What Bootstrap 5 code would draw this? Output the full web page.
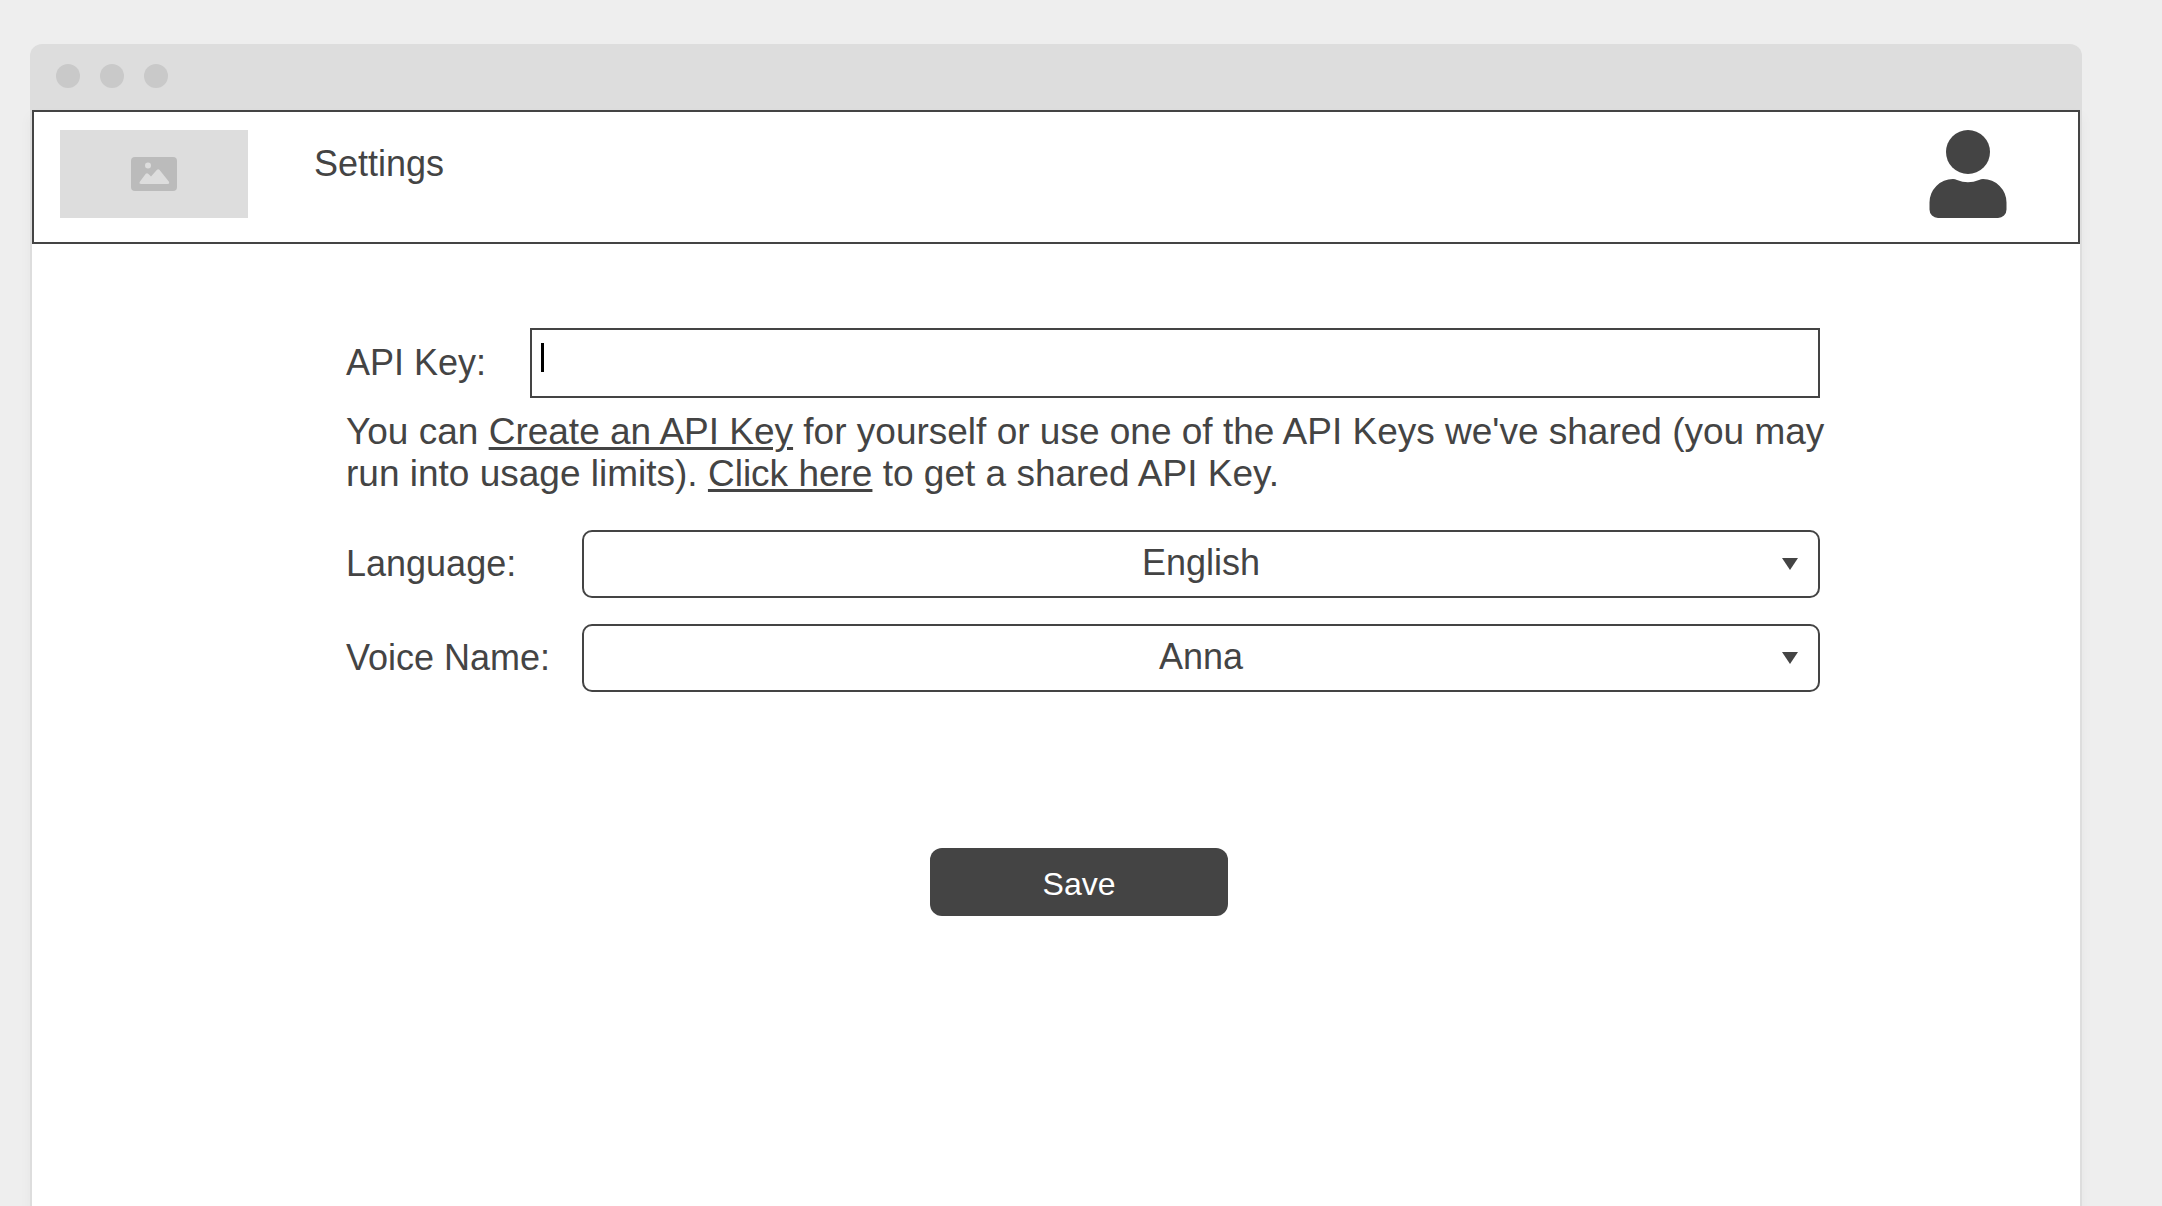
<!DOCTYPE html>
<html lang="en">
<head>
<meta charset="utf-8">
<meta name="viewport" content="width=device-width, initial-scale=1">
<title>Settings</title>
<link href="https://cdn.jsdelivr.net/npm/bootstrap@5.3.0/dist/css/bootstrap.min.css" rel="stylesheet">
<style>
  :root { --ink: #444; --chrome: #ddd; }
  body { background: #eee; color: var(--ink); font-family: "Liberation Sans", Arial, sans-serif; font-size: 36px; line-height: 42px; }
  .stage { padding: 44px 80px 0 30px; }
  .title-strip { background: var(--chrome); border-radius: 12px 12px 0 0; padding: 20px 26px 22px; gap: 20px; }
  .dot { width: 24px; height: 24px; background: #c9c9c9; }
  .pane { border: solid var(--chrome); border-width: 0 2px; box-shadow: 0 6px 12px rgba(0,0,0,.04); }
  .app-bar { border: 2px solid var(--ink); padding: 18px 71px 24px 26px; gap: 66px; }
  .logo-box { width: 188px; height: 88px; background: var(--chrome); }
  .app-title { font-size: 36px; line-height: 42px; margin-top: 13px; font-weight: 400; }
  .settings-form { padding: 84px 260px 80px 314px; }
  .key-label { width: 184px; }
  .pick-label { width: 236px; }
  .key-input, .key-input:focus { height: 70px; border: 2px solid var(--ink); border-radius: 0; font-size: 36px; color: var(--ink); box-shadow: none; }
  .caret-bar { left: 11px; top: 15px; width: 3px; height: 29px; background: #000; }
  .help-text { margin: 13px -8px 35px 0; font-size: 37px; }
  .help-text a { color: inherit; text-decoration-thickness: 3px; text-underline-offset: 3px; }
  .pick { height: 68px; border: 2px solid var(--ink); border-radius: 10px; padding: 7px 36px 9px; font-size: 36px; line-height: 48px; color: var(--ink); text-align-last: center;
    background-image: url("data:image/svg+xml,%3Csvg xmlns='http://www.w3.org/2000/svg' viewBox='0 0 16 12'%3E%3Cpath d='M0 0H16L8 12Z' fill='%23444'/%3E%3C/svg%3E"); background-size: 16px 12px; background-position: right 20px center; }
  .pick-row + .pick-row { margin-top: 26px; }
  .save-row { margin-top: 156px; }
  .save-btn, .save-btn:hover { width: 298px; height: 68px; border: 0; border-radius: 12px; background: var(--ink); color: #fff; font-size: 32px; line-height: 38px; padding: 17px 0 13px; }
</style>
<script src="https://cdn.jsdelivr.net/npm/bootstrap@5.3.0/dist/js/bootstrap.bundle.min.js" defer></script>
</head>
<body>
<div class="stage min-vh-100 d-flex flex-column">
  <div class="title-strip d-flex">
    <span class="dot rounded-circle"></span>
    <span class="dot rounded-circle"></span>
    <span class="dot rounded-circle"></span>
  </div>
  <div class="pane bg-white flex-grow-1">
    <header class="app-bar d-flex align-items-start">
      <div class="logo-box d-flex align-items-center justify-content-center flex-shrink-0">
        <svg width="46" height="34" viewBox="0 0 46 34" role="img" aria-label="Logo">
          <rect width="46" height="34" rx="4" fill="#bbb"/>
          <circle cx="17" cy="8.500" r="3" fill="#ddd"/>
          <path d="M9 24.500 14.800 16.800Q16 15.500 17.200 16.800L20 19.500 26 12.800Q27.200 11.500 28.400 12.800L37.800 24.500Q39 27 36.500 27H10.200Q7.500 27 9 24.500Z" fill="#ddd"/>
        </svg>
      </div>
      <h1 class="app-title mb-0">Settings</h1>
      <svg class="ms-auto flex-shrink-0" width="78" height="88" viewBox="0 0 78 88" fill="#444" role="img" aria-label="Account">
        <circle cx="39" cy="22" r="22"/>
        <path d="M24 49Q26 49 28 50Q39 54.500 50 50Q52 49 54 49A23.500 23.500 0 0 1 77.500 72.500V79.500A8.500 8.500 0 0 1 69 88H9A8.500 8.500 0 0 1 .5 79.500V72.500A23.500 23.500 0 0 1 24 49Z"/>
      </svg>
    </header>
    <form class="settings-form" onsubmit="return false">
      <div class="d-flex align-items-center">
        <label class="key-label flex-shrink-0" for="apiKey">API Key:</label>
        <div class="position-relative flex-grow-1">
          <input class="form-control key-input" type="text" id="apiKey">
          <span class="caret-bar position-absolute"></span>
        </div>
      </div>
      <p class="help-text">You can <a href="#">Create an API Key</a> for yourself or use one of the API Keys we've shared (you may run into usage limits). <a href="#">Click here</a> to get a shared API Key.</p>
      <div class="pick-row d-flex align-items-center">
        <label class="pick-label flex-shrink-0" for="language">Language:</label>
        <select class="form-select pick" id="language"><option>English</option></select>
      </div>
      <div class="pick-row d-flex align-items-center">
        <label class="pick-label flex-shrink-0" for="voice">Voice Name:</label>
        <select class="form-select pick" id="voice"><option>Anna</option></select>
      </div>
      <div class="save-row d-flex justify-content-center">
        <button class="btn save-btn me-2" type="submit">Save</button>
      </div>
    </form>
  </div>
</div>
</body>
</html>
